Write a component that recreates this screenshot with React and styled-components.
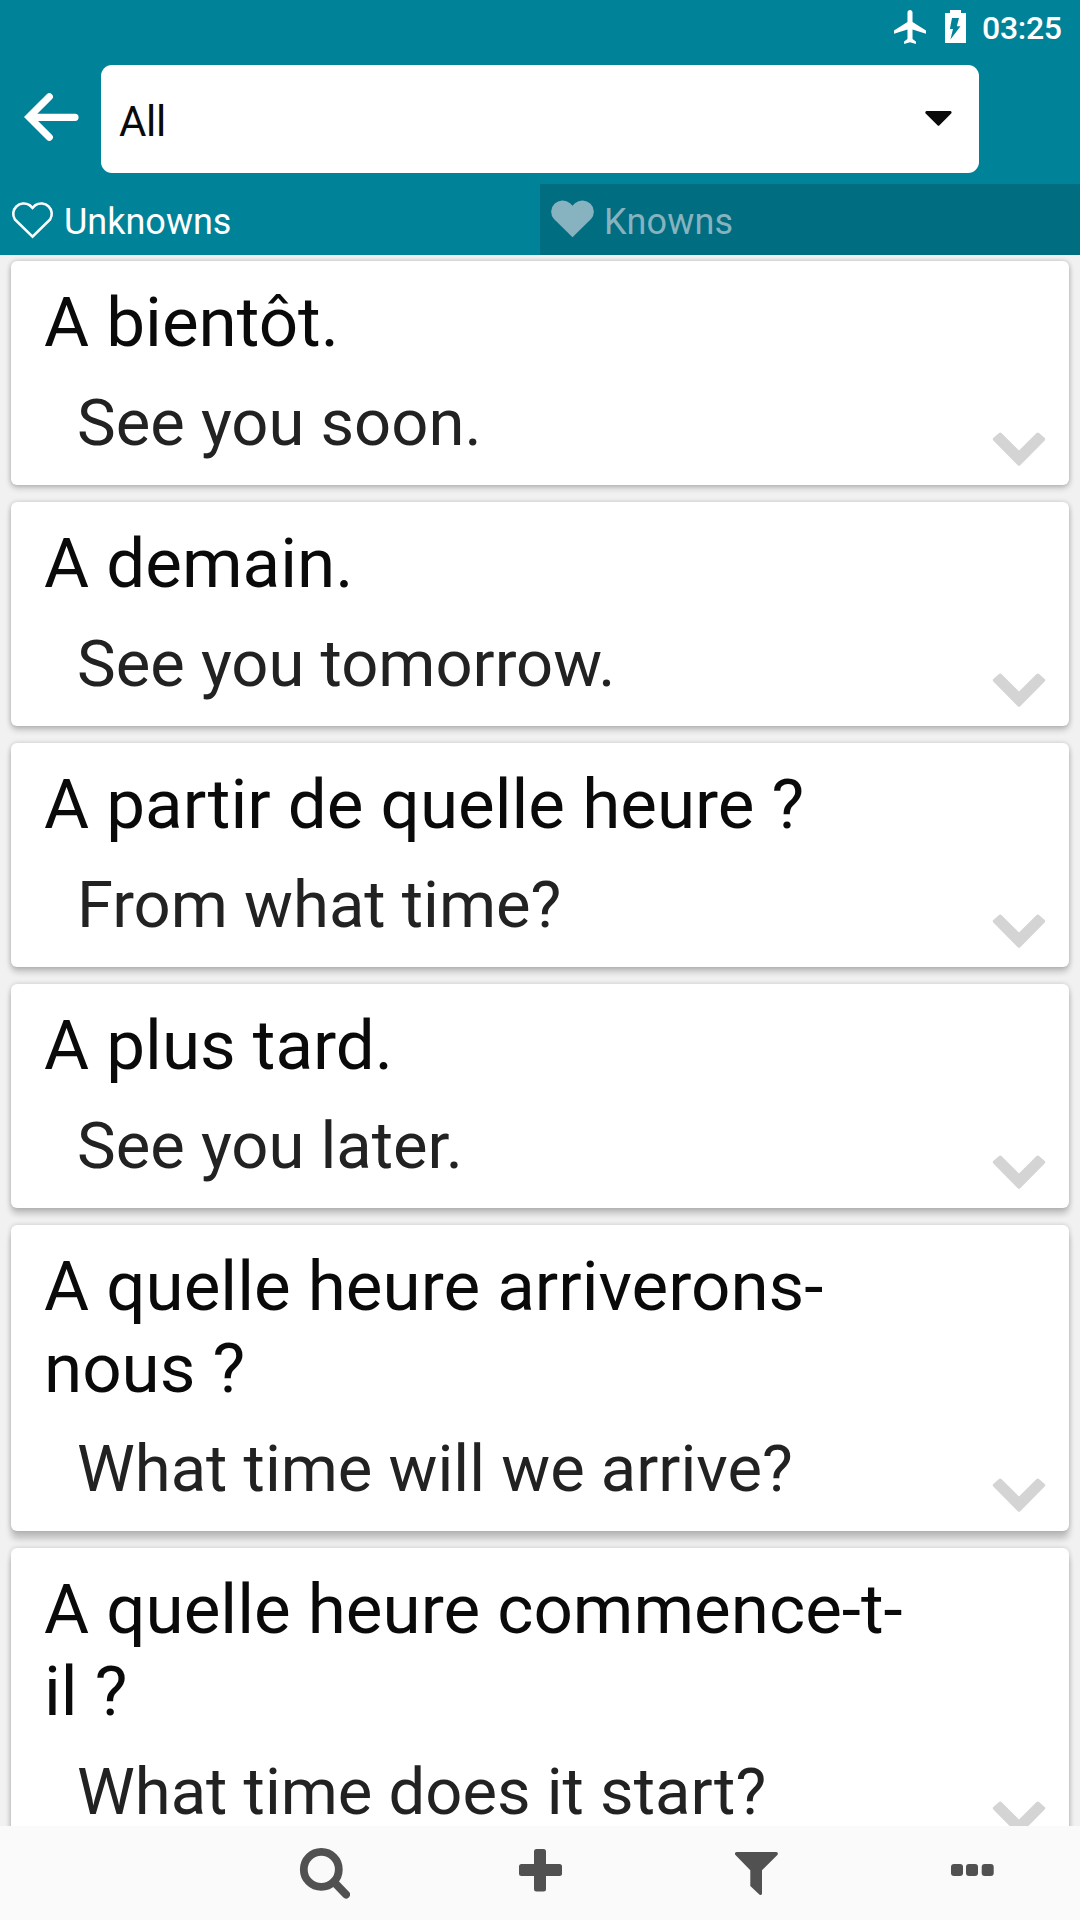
import styled, { createGlobalStyle } from "styled-components";

const GlobalStyle = createGlobalStyle`
    * {
        box-sizing: border-box;
    }

    body {
        margin: 0;
        font-family: Roboto, "Liberation Sans", sans-serif;
        background: #f1f1f1;
    }
`;

const Screen = styled.div`
    width: 1080px;
    height: 1920px;
    display: flex;
    flex-direction: column;
    overflow: hidden;
    background: #f1f1f1;
`;

const Header = styled.header`
    flex: 0 0 255px;
    display: flex;
    flex-direction: column;
    background: #008299;
    color: #ffffff;
`;

const StatusBar = styled.div`
    height: 65px;
    padding: 10px 18px 0 0;
    display: flex;
    align-items: flex-start;
    justify-content: flex-end;
`;

const Clock = styled.span`
    margin-left: 16px;
    padding-top: 1px;
    width: 80px;
    font-size: 32px;
    font-weight: 500;
    line-height: 34px;
    letter-spacing: -0.3px;
    white-space: nowrap;
`;

const PlaneIcon = styled.svg`
    margin-right: 19px;
`;

const Toolbar = styled.div`
    height: 119px;
    display: flex;
    align-items: flex-start;
`;

const BackButton = styled.button`
    width: 101px;
    height: 104px;
    padding: 0 0 0 24px;
    border: none;
    background: none;
    display: flex;
    align-items: center;
    color: inherit;
`;

const Select = styled.div`
    width: 878px;
    height: 108px;
    padding: 5px 27px 0 18px;
    border-radius: 11px;
    display: flex;
    align-items: center;
    justify-content: space-between;
    background: #ffffff;
    color: #0a0a0a;
    font-size: 42px;
    letter-spacing: -0.3px;
`;

const Caret = styled.svg`
    margin-top: -7px;
`;

const Tabs = styled.div`
    flex: 1;
    display: grid;
    grid-template-columns: 1fr 1fr;
`;

const Tab = styled.div`
    padding: ${(props) => (props.$active ? "17px" : "16px")} 0 0 11px;
    display: flex;
    align-items: flex-start;
    background: ${(props) => (props.$active ? "#008299" : "#006d80")};
    color: ${(props) => (props.$active ? "#ffffff" : "#86b3bf")};

    & span {
        margin: ${(props) => (props.$active ? "0" : "1px")} 0 0 10px;
        font-size: 36px;
        line-height: 42px;
        letter-spacing: ${(props) => (props.$active ? "0" : "0.2px")};
    }
`;

const List = styled.main`
    flex: 1;
    min-height: 0;
    overflow: hidden;
    padding: 6px 11px 0;
    display: flex;
    flex-direction: column;
    gap: 17px;
`;

const Card = styled.article`
    flex: none;
    padding: 21px 23px 19px 33px;
    border-radius: 6px;
    display: flex;
    align-items: flex-end;
    justify-content: space-between;
    background: #ffffff;
    box-shadow:
        0 ${(props) => props.$depth}px 6px rgba(0, 0, 0, 0.2),
        0 0 5px rgba(0, 0, 0, 0.18);
`;

const Phrase = styled.div`
    width: 880px;
    padding-bottom: 4px;
`;

const Term = styled.h2`
    margin: 0 0 21px;
    color: #0a0a0a;
    font-size: 69.15px;
    font-weight: 400;
    line-height: 82px;
`;

const Translation = styled.p`
    margin: 0;
    padding-left: 33px;
    color: #222222;
    font-size: 65.15px;
    line-height: 77px;
    white-space: nowrap;
`;

const BottomBar = styled.nav`
    flex: 0 0 94px;
    display: grid;
    grid-template-columns: repeat(5, 1fr);
    background: #fafafa;
`;

const BarButton = styled.button`
    padding: 0;
    border: none;
    background: none;
    color: #515151;

    & svg {
        display: block;
        margin: 0 auto;
    }
`;

function Heart({ filled }) {
    return (
        <svg width="43" height="38" viewBox="0.4 0 42.2 38" preserveAspectRatio="none">
            {filled ? (
                <path
                    d="M21.5 37.3L3.3 19.1A11.2 11.2 0 0 1 19.1 3.3L21.5 5.7L23.9 3.3A11.2 11.2 0 0 1 39.7 19.1Z"
                    fill="currentColor"
                />
            ) : (
                <path
                    d="M21.5 35.7L4.2 18.4A10.4 10.4 0 0 1 18.6 4.1L21.5 7L24.4 4.1A10.4 10.4 0 0 1 38.8 18.4Z"
                    fill="none"
                    stroke="currentColor"
                    strokeWidth="2.5"
                />
            )}
        </svg>
    );
}

function Chevron() {
    return (
        <svg width="54" height="34" viewBox="0 0 54 34">
            <path
                d="M27 33.8Q26.4 33.8 26 33.4L1.3 8.5Q.2 7.3 1.3 6.1L7 .9Q8.2 .2 9.4 .9L27 18.4L44.6 .9Q45.8 .2 47 .9L52.7 6.1Q53.8 7.3 52.7 8.5L28 33.4Q27.6 33.8 27 33.8Z"
                fill="#d4d4d4"
            />
        </svg>
    );
}

const phrases = [
    { term: "A bientôt.", translation: "See you soon.", depth: 3 },
    { term: "A demain.", translation: "See you tomorrow.", depth: 4 },
    { term: "A partir de quelle heure ?", translation: "From what time?", depth: 5 },
    { term: "A plus tard.", translation: "See you later.", depth: 6 },
    {
        term: "A quelle heure arriverons-nous ?",
        translation: "What time will we arrive?",
        depth: 8,
    },
    {
        term: "A quelle heure commence-t-il ?",
        translation: "What time does it start?",
        depth: 8,
    },
];

export default function App() {
    return (
        <Screen>
            <GlobalStyle />
            <Header>
                <StatusBar>
                    <PlaneIcon width="32" height="34" viewBox="2 2 19 20" preserveAspectRatio="none">
                        <path
                            d="M21 16v-2l-8-5V3.5c0-.83-.67-1.5-1.5-1.5S10 2.67 10 3.5V9l-8 5v2l8-2.5V19l-2 1.5V22l3.5-1 3.5 1v-1.5L13 19v-5.5l8 2.5z"
                            fill="currentColor"
                        />
                    </PlaneIcon>
                    <svg width="21" height="33" viewBox="0 0 21 33">
                        <path d="M0 3H5V0H16V3H21V33H0Z" fill="currentColor" />
                        <path d="M7 8H14L11.8 16.2H15.5L5.4 29.5L8 19H4.9Z" fill="#008299" />
                    </svg>
                    <Clock>03:25</Clock>
                </StatusBar>
                <Toolbar>
                    <BackButton aria-label="Back">
                        <svg width="56" height="50" viewBox="24 92 56 50">
                            <path
                                d="M49.3 96.7L29 117L49.3 137.3M30 117.3H75"
                                fill="none"
                                stroke="currentColor"
                                strokeWidth="7.2"
                                strokeLinecap="round"
                            />
                        </svg>
                    </BackButton>
                    <Select>
                        All
                        <Caret width="27" height="15" viewBox="0 0 27 15">
                            <path
                                d="M1.5 0H25.5Q27 .3 26.4 2.2L14.5 14.3Q13.5 15.4 12.5 14.3L.4 2.2Q0 .3 1.5 0Z"
                                fill="#0a0a0a"
                            />
                        </Caret>
                    </Select>
                </Toolbar>
                <Tabs>
                    <Tab $active>
                        <Heart />
                        <span>Unknowns</span>
                    </Tab>
                    <Tab>
                        <Heart filled />
                        <span>Knowns</span>
                    </Tab>
                </Tabs>
            </Header>
            <List>
                {phrases.map((phrase) => (
                    <Card key={phrase.term} $depth={phrase.depth}>
                        <Phrase>
                            <Term>{phrase.term}</Term>
                            <Translation>{phrase.translation}</Translation>
                        </Phrase>
                        <Chevron />
                    </Card>
                ))}
            </List>
            <BottomBar>
                <span />
                <BarButton aria-label="Search">
                    <svg width="52" height="52" viewBox="298 1847 52 52">
                        <circle cx="321.3" cy="1869.4" r="17.5" fill="none" stroke="currentColor" strokeWidth="7.8" />
                        <path d="M334 1882L346 1894.5" stroke="currentColor" strokeWidth="8" strokeLinecap="round" />
                    </svg>
                </BarButton>
                <BarButton aria-label="Add">
                    <svg width="52" height="52" viewBox="514 1847 52 52">
                        <rect x="534" y="1849" width="12" height="42.5" rx="2.5" fill="currentColor" />
                        <rect x="519" y="1864" width="43" height="12" rx="2.5" fill="currentColor" />
                    </svg>
                </BarButton>
                <BarButton aria-label="Filter">
                    <svg width="52" height="52" viewBox="730 1847 52 52">
                        <path
                            d="M736.5 1852H776.3Q778.5 1852.5 777.6 1854.8L762 1870.3V1893.5Q761.5 1895.6 759.6 1894.8L750.3 1886V1870.3L735.2 1854.8Q734.3 1852.5 736.5 1852Z"
                            fill="currentColor"
                        />
                    </svg>
                </BarButton>
                <BarButton aria-label="More">
                    <svg width="52" height="52" viewBox="946 1847 52 52">
                        <rect x="951" y="1864" width="12" height="12" rx="3" fill="currentColor" />
                        <rect x="966" y="1864" width="12" height="12" rx="3" fill="currentColor" />
                        <rect x="981.7" y="1864" width="12" height="12" rx="3" fill="currentColor" />
                    </svg>
                </BarButton>
            </BottomBar>
        </Screen>
    );
}
